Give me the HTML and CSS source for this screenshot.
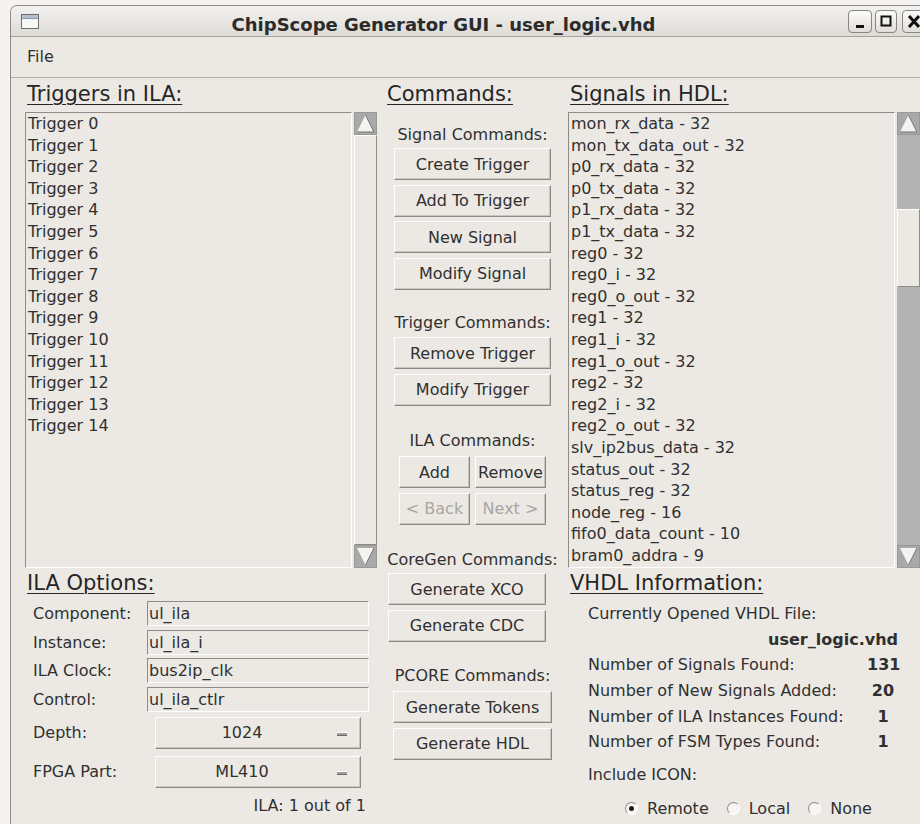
FILE: index.html
```html
<!DOCTYPE html>
<html>
<head>
<meta charset="utf-8">
<title>ChipScope Generator GUI - user_logic.vhd</title>
<link rel="stylesheet" href="styles.css">
</head>
<body>
<div class="window">
  <div class="titlebar">
    <svg class="wm-icon" width="18" height="15" viewBox="0 0 18 15">
      <rect x="0.5" y="0.5" width="17" height="14" fill="#f7f7f7" stroke="#6f6f6f"/>
      <rect x="1" y="1" width="16" height="3" fill="#b4c0d0"/>
      <line x1="1" y1="4.5" x2="17" y2="4.5" stroke="#8d97a5"/>
    </svg>
    <div class="title">ChipScope Generator GUI - user_logic.vhd</div>
    <div class="wm-buttons">
      <div class="wm-btn w24">
        <svg width="22" height="21" viewBox="0 0 22 21"><rect x="7" y="14" width="8" height="3" fill="#111"/></svg>
      </div>
      <div class="wm-btn w22">
        <svg width="20" height="21" viewBox="0 0 20 21"><rect x="5.5" y="5.5" width="9" height="9" fill="none" stroke="#111" stroke-width="2"/></svg>
      </div>
      <div class="wm-btn w24">
        <svg width="22" height="21" viewBox="0 0 22 21"><path d="M6 5 L16 16 M16 5 L6 16" stroke="#111" stroke-width="3"/></svg>
      </div>
    </div>
  </div>

  <div class="menubar"><span class="menu-item">File</span></div>

  <div class="main">
    <section class="pane">
      <h2 class="heading">Triggers in ILA:</h2>
      <div class="listwrap">
        <div class="listbox">
          <div class="row">Trigger 0</div>
          <div class="row">Trigger 1</div>
          <div class="row">Trigger 2</div>
          <div class="row">Trigger 3</div>
          <div class="row">Trigger 4</div>
          <div class="row">Trigger 5</div>
          <div class="row">Trigger 6</div>
          <div class="row">Trigger 7</div>
          <div class="row">Trigger 8</div>
          <div class="row">Trigger 9</div>
          <div class="row">Trigger 10</div>
          <div class="row">Trigger 11</div>
          <div class="row">Trigger 12</div>
          <div class="row">Trigger 13</div>
          <div class="row">Trigger 14</div>
        </div>
        <div class="scrollbar">
          <div class="arrow">
            <svg width="23" height="23" viewBox="0 0 23 23"><polygon points="3,20 11.5,3 20,20" fill="#f3f3f2"/><path d="M11.5 3 L20 20 L3 20" fill="none" stroke="#707070"/></svg>
          </div>
          <div class="trough"><div class="thumb thumb-full"></div></div>
          <div class="arrow">
            <svg width="23" height="23" viewBox="0 0 23 23"><polygon points="3,3 20,3 11.5,20" fill="#f3f3f2"/><path d="M20 3 L11.5 20" fill="none" stroke="#707070"/></svg>
          </div>
        </div>
      </div>
    </section>

    <section class="commands">
      <h2 class="heading">Commands:</h2>
      <div class="group-label gl-signal">Signal Commands:</div>
      <div class="btn wide first">Create Trigger</div>
      <div class="btn wide">Add To Trigger</div>
      <div class="btn wide">New Signal</div>
      <div class="btn wide">Modify Signal</div>

      <div class="group-label gl-trigger">Trigger Commands:</div>
      <div class="btn wide first">Remove Trigger</div>
      <div class="btn wide">Modify Trigger</div>

      <div class="group-label gl-ila">ILA Commands:</div>
      <div class="btn-pair first">
        <div class="btn half">Add</div>
        <div class="btn half">Remove</div>
      </div>
      <div class="btn-pair">
        <div class="btn half disabled">&lt; Back</div>
        <div class="btn half disabled">Next &gt;</div>
      </div>

      <div class="group-label gl-coregen">CoreGen Commands:</div>
      <div class="btn coregen first">Generate XCO</div>
      <div class="btn coregen">Generate CDC</div>

      <div class="group-label gl-pcore">PCORE Commands:</div>
      <div class="btn pcore first">Generate Tokens</div>
      <div class="btn pcore">Generate HDL</div>
    </section>

    <section class="pane">
      <h2 class="heading">Signals in HDL:</h2>
      <div class="listwrap">
        <div class="listbox">
          <div class="row">mon_rx_data - 32</div>
          <div class="row">mon_tx_data_out - 32</div>
          <div class="row">p0_rx_data - 32</div>
          <div class="row">p0_tx_data - 32</div>
          <div class="row">p1_rx_data - 32</div>
          <div class="row">p1_tx_data - 32</div>
          <div class="row">reg0 - 32</div>
          <div class="row">reg0_i - 32</div>
          <div class="row">reg0_o_out - 32</div>
          <div class="row">reg1 - 32</div>
          <div class="row">reg1_i - 32</div>
          <div class="row">reg1_o_out - 32</div>
          <div class="row">reg2 - 32</div>
          <div class="row">reg2_i - 32</div>
          <div class="row">reg2_o_out - 32</div>
          <div class="row">slv_ip2bus_data - 32</div>
          <div class="row">status_out - 32</div>
          <div class="row">status_reg - 32</div>
          <div class="row">node_reg - 16</div>
          <div class="row">fifo0_data_count - 10</div>
          <div class="row">bram0_addra - 9</div>
        </div>
        <div class="scrollbar">
          <div class="arrow">
            <svg width="23" height="23" viewBox="0 0 23 23"><polygon points="3,20 11.5,3 20,20" fill="#f3f3f2"/><path d="M11.5 3 L20 20 L3 20" fill="none" stroke="#707070"/></svg>
          </div>
          <div class="trough"><div class="thumb thumb-part"></div></div>
          <div class="arrow">
            <svg width="23" height="23" viewBox="0 0 23 23"><polygon points="3,3 20,3 11.5,20" fill="#f3f3f2"/><path d="M20 3 L11.5 20" fill="none" stroke="#707070"/></svg>
          </div>
        </div>
      </div>
    </section>

    <section class="ila-options">
      <h2 class="heading">ILA Options:</h2>
      <div class="entry-grid">
        <div class="field-label">Component:</div><div class="entry">ul_ila</div>
        <div class="field-label">Instance:</div><div class="entry">ul_ila_i</div>
        <div class="field-label">ILA Clock:</div><div class="entry">bus2ip_clk</div>
        <div class="field-label">Control:</div><div class="entry">ul_ila_ctlr</div>
      </div>
      <div class="opt-row depth">
        <div class="field-label">Depth:</div>
        <div class="optmenu"><span class="opt-text">1024</span><span class="opt-ind"></span></div>
      </div>
      <div class="opt-row fpga">
        <div class="field-label">FPGA Part:</div>
        <div class="optmenu"><span class="opt-text">ML410</span><span class="opt-ind"></span></div>
      </div>
      <div class="ila-count">ILA: 1 out of 1</div>
    </section>

    <section class="vhdl-info">
      <h2 class="heading">VHDL Information:</h2>
      <div class="info-grid">
        <div class="info-line span">Currently Opened VHDL File:</div>
        <div class="info-line span file">user_logic.vhd</div>
        <div class="info-line">Number of Signals Found:</div><div class="info-line val">131</div>
        <div class="info-line">Number of New Signals Added:</div><div class="info-line val">20</div>
        <div class="info-line">Number of ILA Instances Found:</div><div class="info-line val">1</div>
        <div class="info-line">Number of FSM Types Found:</div><div class="info-line val">1</div>
      </div>
      <div class="info-line include">Include ICON:</div>
      <div class="radios">
        <label class="radio"><span class="dot on"></span>Remote</label>
        <label class="radio"><span class="dot"></span>Local</label>
        <label class="radio"><span class="dot"></span>None</label>
      </div>
    </section>
  </div>
</div>
</body>
</html>
```

FILE: styles.css
```css
* {
  box-sizing: border-box;
  margin: 0;
  padding: 0;
}

html, body {
  width: 920px;
  height: 824px;
  overflow: hidden;
}

body {
  background: #f4f3f1;
  padding: 5px 0 0 10px;
  font-family: "DejaVu Sans", "Noto Sans", sans-serif;
  font-size: 16px;
  color: #303030;
}

/* ---- window frame ---- */
.window {
  width: 920px;
  height: 830px;
  background: #ece9e4;
  border-top: 1px solid #8e8b86;
  border-left: 1px solid #8e8b86;
  border-top-left-radius: 7px;
  overflow: hidden;
}

.titlebar {
  height: 31px;
  display: flex;
  align-items: center;
  padding: 0 4px 0 10px;
  background: linear-gradient(#f3f2f0, #dedbd6);
  border-bottom: 1px solid #a5a29c;
}

.wm-icon {
  flex: none;
  display: block;
}

.title {
  flex: 1;
  text-align: center;
  font-weight: bold;
  font-size: 18px;
  color: #2b2b2b;
  padding-top: 6px;
  white-space: nowrap;
}

.wm-buttons {
  display: flex;
  gap: 3px;
}

.wm-btn {
  height: 23px;
  border: 1px solid #8a8782;
  border-radius: 4px;
  background: linear-gradient(#fbfbfa, #e1ded9);
  display: flex;
  align-items: center;
  justify-content: center;
}

.wm-btn.w24 { width: 24px; }
.wm-btn.w22 { width: 22px; }
.wm-btn:last-child { margin-left: 2px; }

.menubar {
  height: 41px;
  border-bottom: 1px solid #b1aea8;
  padding-left: 16px;
  line-height: 40px;
}

/* ---- main layout ---- */
.main {
  display: grid;
  grid-template-columns: 352px 171px 352px;
  grid-template-rows: 489px auto;
  column-gap: 10px;
  padding: 2px 0 0 14px;
}

.heading {
  font-size: 21px;
  font-weight: normal;
  line-height: 29px;
  height: 29px;
  margin-bottom: 3px;
  padding-left: 2px;
  color: #262626;
  text-decoration: underline;
  text-decoration-thickness: 1px;
  text-underline-offset: 3px;
  white-space: nowrap;
}

/* ---- list boxes ---- */
.listwrap {
  display: flex;
  gap: 2px;
  height: 456px;
}

.listbox {
  flex: 1;
  border: 1px solid;
  border-color: #8f8c87 #ffffff #ffffff #8f8c87;
  padding-left: 2px;
  overflow: hidden;
}

.listbox .row {
  height: 21.6px;
  line-height: 21.6px;
  white-space: nowrap;
}

.scrollbar {
  width: 23px;
  display: flex;
  flex-direction: column;
  background: #b3b3b3;
}

.arrow {
  height: 23px;
  background: #a9a9a9;
  border: 1px solid #9a9894;
}

.arrow svg {
  display: block;
  margin: -1px;
}

.trough {
  flex: 1;
  display: flex;
  flex-direction: column;
}

.thumb {
  background: #ece9e4;
  border: 1px solid;
  border-color: #ffffff #8f8c87 #8f8c87 #ffffff;
}

.thumb-full { flex: 1; }

.thumb-part {
  margin-top: 74px;
  height: 78px;
}

/* ---- command column ---- */
.commands {
  grid-row: 1 / 3;
  grid-column: 2;
  display: flex;
  flex-direction: column;
  align-items: center;
}

.commands .heading {
  align-self: flex-start;
  padding-left: 0;
}

.group-label {
  line-height: 22px;
  height: 22px;
  white-space: nowrap;
}

.gl-signal { margin-top: 11.5px; }
.gl-trigger { margin-top: 22.5px; }
.gl-ila { margin-top: 24.5px; }
.gl-coregen { margin-top: 24px; }
.gl-pcore { margin-top: 23px; }

.btn {
  height: 32px;
  display: flex;
  align-items: center;
  justify-content: center;
  background: #ece9e4;
  border: 1px solid;
  border-color: #ffffff #8d8a85 #8d8a85 #ffffff;
  box-shadow: inset -1px -1px 0 #c9c6c0;
  white-space: nowrap;
  margin-top: 4.5px;
}

.btn.first { margin-top: 2.5px; }
.gl-trigger + .btn.first { margin-top: 3px; }
.gl-pcore + .btn.first { margin-top: 4.5px; }

.btn.wide { width: 157px; }

.btn.coregen {
  width: 158px;
  align-self: flex-start;
  margin-left: 1px;
}

.btn.pcore { width: 159px; }

.btn-pair {
  display: flex;
  gap: 5px;
  margin-top: 4.5px;
}

.btn-pair.first { margin-top: 4px; }

.btn-pair .btn {
  margin-top: 0;
  width: 71px;
}

.btn.disabled { color: #a9a6a1; }

/* ---- ILA options ---- */
.ila-options {
  grid-row: 2;
  grid-column: 1;
}

.entry-grid {
  display: grid;
  grid-template-columns: 122px 222px;
  grid-auto-rows: 25px;
  row-gap: 3.67px;
  margin-top: 1px;
}

.field-label {
  padding-left: 8px;
  display: flex;
  align-items: center;
  white-space: nowrap;
}

.entry {
  border: 1px solid;
  border-color: #8f8c87 #ffffff #ffffff #8f8c87;
  padding-left: 1px;
  line-height: 23px;
  white-space: nowrap;
}

.opt-row {
  display: grid;
  grid-template-columns: 130px 206px;
  height: 32px;
}

.opt-row.depth { margin-top: 5px; }
.opt-row.fpga { margin-top: 7px; }

.optmenu {
  display: flex;
  align-items: center;
  border: 1px solid;
  border-color: #ffffff #8d8a85 #8d8a85 #ffffff;
  box-shadow: inset -1px -1px 0 #c9c6c0;
}

.opt-text {
  flex: 1;
  text-align: center;
}

.opt-ind {
  width: 10px;
  height: 4px;
  margin: 2px 13px 0 9px;
  background: #a19e99;
  border-top: 1px solid #ffffff;
  border-bottom: 1px solid #6f6c68;
}

.ila-count {
  margin-top: 7px;
  line-height: 22px;
  text-align: right;
  padding-right: 11px;
}

/* ---- VHDL information ---- */
.vhdl-info {
  grid-row: 2;
  grid-column: 3;
}

.info-grid {
  display: grid;
  grid-template-columns: 1fr 32px;
  padding: 0 21px 0 20px;
  margin-top: 0.6px;
}

.info-line {
  line-height: 25.7px;
  height: 25.7px;
  white-space: nowrap;
}

.info-line.span { grid-column: 1 / 3; }

.info-line.file {
  text-align: right;
  font-weight: bold;
  padding-right: 1px;
}

.info-line.val {
  text-align: center;
  font-weight: bold;
}

.info-line.include {
  margin-top: 6.5px;
  padding-left: 20px;
}

.radios {
  display: flex;
  align-items: center;
  gap: 18px;
  padding-left: 57px;
  margin-top: 8.6px;
  height: 25.7px;
}

.radio {
  display: flex;
  align-items: center;
  gap: 9px;
  white-space: nowrap;
}

.dot {
  width: 13px;
  height: 13px;
  border-radius: 50%;
  border: 1px solid;
  border-color: #8f8c87 #ffffff #ffffff #8f8c87;
  background: #f7f6f4;
  display: flex;
  align-items: center;
  justify-content: center;
}

.dot.on::after {
  content: "";
  width: 5px;
  height: 5px;
  border-radius: 50%;
  background: #1e1e1e;
}
```
